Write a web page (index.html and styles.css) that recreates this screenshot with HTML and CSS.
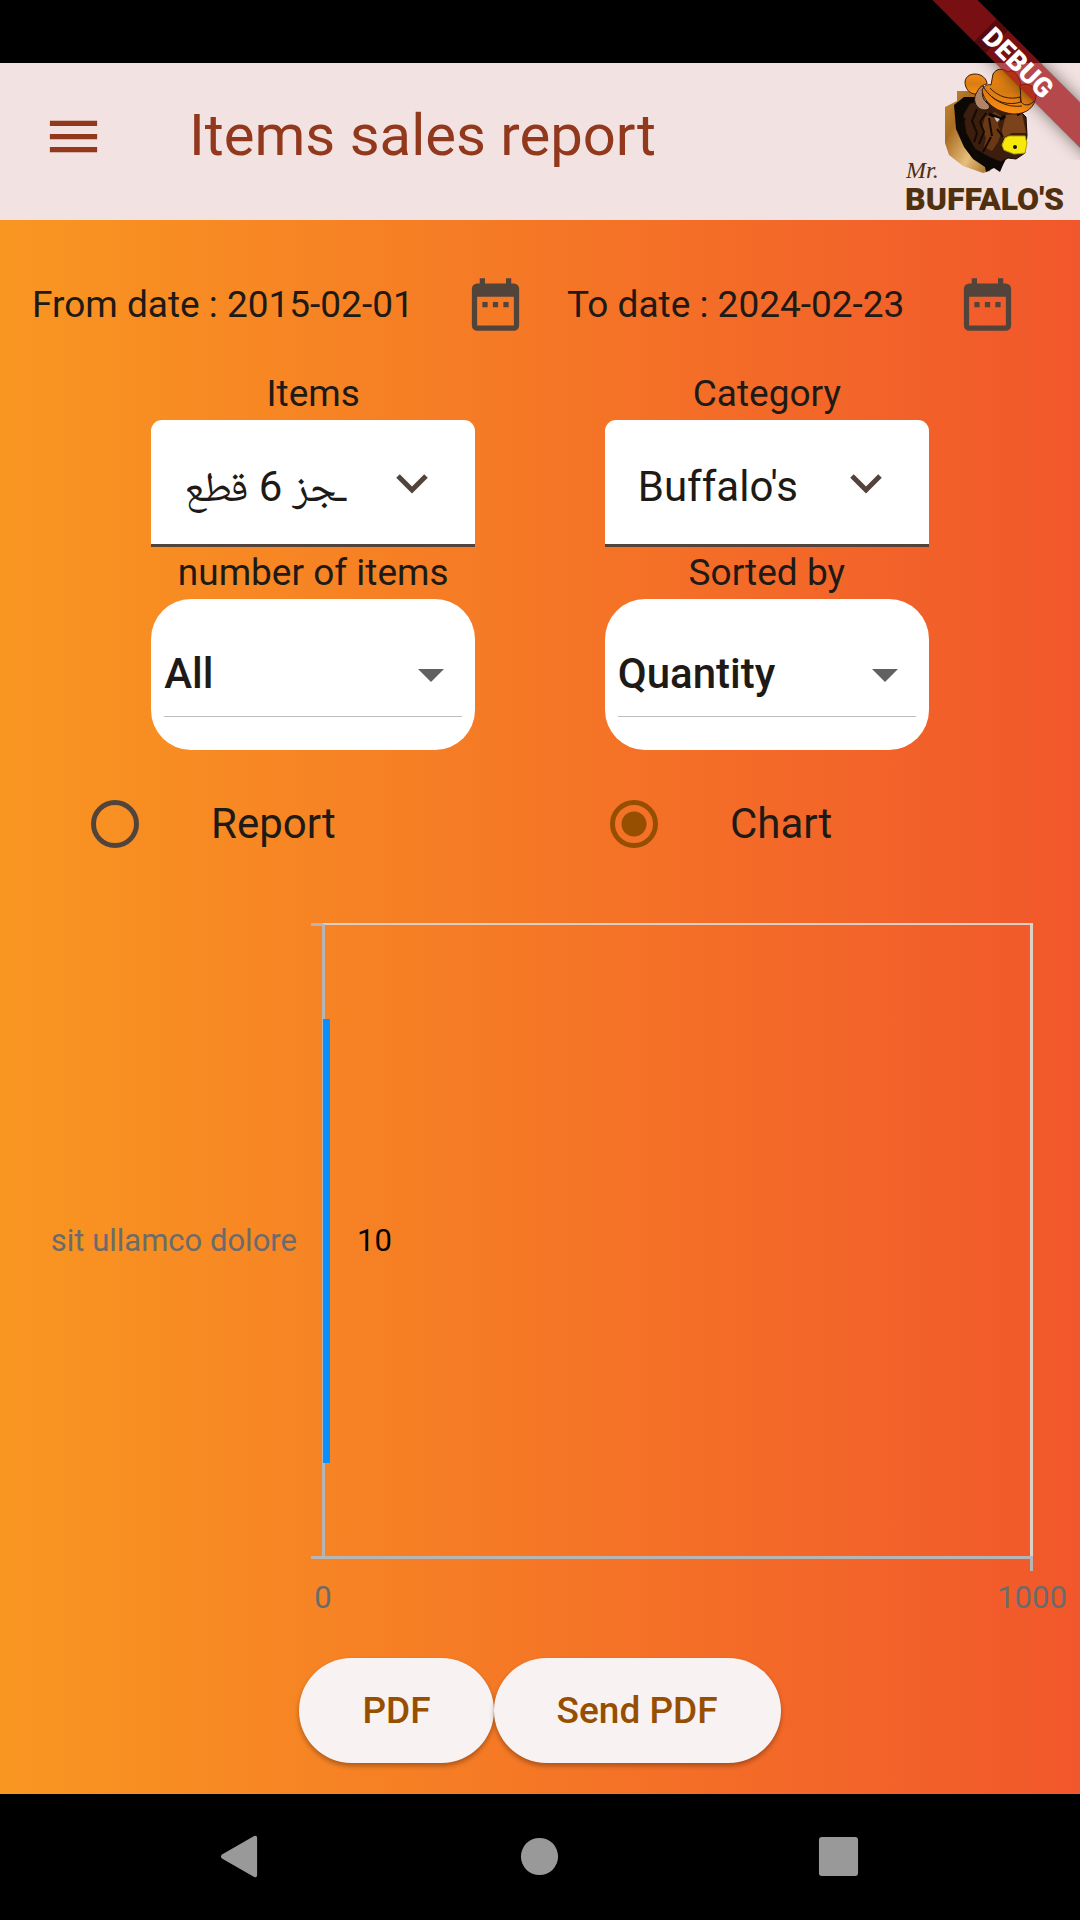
FILE: index.html
```html
<!DOCTYPE html>
<html lang="en">
<head>
<meta charset="utf-8">
<meta name="viewport" content="width=device-width, initial-scale=1">
<title>Items sales report</title>
<link rel="stylesheet" href="styles.css">
</head>
<body>
<div class="screen">
  <div class="status-bar"></div>

  <header class="app-bar">
    <button class="icon-button menu" type="button" aria-label="Open menu">
      <svg class="icon" viewBox="0 0 24 24"><path d="M3 18h18v-2H3v2zm0-5h18v-2H3v2zm0-7v2h18V6H3z"/></svg>
    </button>
    <h1 class="title">Items sales report</h1>
    <svg class="logo" viewBox="0 0 164 146" role="img" aria-label="Mr. Buffalo's">
      <defs>
        <linearGradient id="wood" x1="0" y1="0" x2="1" y2="1">
          <stop offset="0" stop-color="#c58a35"/><stop offset="0.3" stop-color="#a86d22"/>
          <stop offset="0.65" stop-color="#e8bd7c"/><stop offset="1" stop-color="#9c641c"/>
        </linearGradient>
        <linearGradient id="hat" x1="0" y1="0" x2="0" y2="1">
          <stop offset="0" stop-color="#f58a12"/><stop offset="0.5" stop-color="#d97c14"/><stop offset="1" stop-color="#ff8e12"/>
        </linearGradient>
      </defs>
      <path d="M55 22h30l5 76-2 4-7 2-20-7-14-11-4-12V38l12-6z" fill="url(#wood)"/>
      <path d="M62 28h14l20 20 9 40-4 8-3 7-6-4-8 4-1-5-12-8-9-12-8-18-2-24z" fill="#0c0806"/>
      <path d="M68 34l20-2 30 10 6 6 1 18-2 18-9 6-8-1-7 4-12-5-14-8-9-16-3-18z" fill="#3b1e0d" stroke="#160b05" stroke-width="1"/>
      <path d="M83 48l10-5 7 5-4 7 3 10-3 8-6 9-8-4 2-9-4-10z" fill="#6b3815"/>
      <path d="M104 46l16-2 4 20h-14l-9 5-1-8z" fill="#7b4319"/>
      <path d="M75 40l-5 12 5 12-3 9m12-29-6 9 4 10-5 12m12-7-8 15m-18-34-4 8 3 9m33-6 6 8m-33 10 9 12m10-41 3 18" fill="none" stroke="#150a04" stroke-width="2"/>
      <path d="M87 45l12 5 4-3m12-1 6-4" fill="none" stroke="#0c0806" stroke-width="3"/>
      <path d="M92 48l6 2-3 3z" fill="#c9d4d0"/>
      <path d="M103 69l4-2h16l2 7-2 10-11 1-10-4-2-5z" fill="#f7e80c" stroke="#b6a60c"/>
      <circle cx="113" cy="78" r="2" fill="#111"/>
      <path d="M74 24c-4 9 1 17 9 17 5 0 6-4 2-7-5-5-6-9-3-17-4 0-7 3-8 7z" fill="#b08468" stroke="#22130b" stroke-width="1"/>
      <path d="M64 18c-3-7 1-13 9-13 7 0 12 5 12 10-7 1-9 6-11 10-4 0-8-2-10-7z" fill="url(#hat)" stroke="#3a1d05"/>
      <path d="M80 21c3-5 6-6 9-5l2-11c5-8 12-4 15-2 5-4 11 3 13 13 9-3 15 3 15 11-1 11-9 18-22 18-15-1-30-10-32-24z" fill="url(#hat)" stroke="#3a1d05"/>
      <path d="M88 19c8 9 20 12 30 9l1 5c-12 4-26 0-33-9M82 19c8 12 22 20 38 18M118 16l1 17c4 5 10 3 14-2" fill="none" stroke="#3a1d05" stroke-width="1"/>
      <text class="logo-mr" x="4" y="109">Mr.</text>
      <text class="logo-name" x="3" y="141">BUFFALO'S</text>
    </svg>
  </header>

  <main class="content">
    <section class="dates" aria-label="Date range">
      <span>From date : 2015-02-01</span>
      <button class="icon-button calendar" type="button" aria-label="Pick from date">
        <svg class="icon" viewBox="0 0 24 24"><path d="M19 4h-1V2h-2v2H8V2H6v2H5a2 2 0 0 0-2 2v14a2 2 0 0 0 2 2h14a2 2 0 0 0 2-2V6a2 2 0 0 0-2-2zm0 16H5V9h14v11zM7 11h2v2H7zm4 0h2v2h-2zm4 0h2v2h-2z"/></svg>
      </button>
      <span>To date : 2024-02-23</span>
      <button class="icon-button calendar" type="button" aria-label="Pick to date">
        <svg class="icon" viewBox="0 0 24 24"><path d="M19 4h-1V2h-2v2H8V2H6v2H5a2 2 0 0 0-2 2v14a2 2 0 0 0 2 2h14a2 2 0 0 0 2-2V6a2 2 0 0 0-2-2zm0 16H5V9h14v11zM7 11h2v2H7zm4 0h2v2h-2zm4 0h2v2h-2z"/></svg>
      </button>
    </section>

    <section class="filters" aria-label="Filters">
      <div class="field">
        <label for="items">Items</label>
        <div class="filled">
          <select id="items"><option>ـجز 6 قطع</option></select>
          <svg class="chevron" viewBox="0 0 32 20"><path d="M2 2l14 14L30 2" fill="none" stroke="currentColor" stroke-width="5"/></svg>
        </div>
      </div>
      <div class="field">
        <label for="category">Category</label>
        <div class="filled">
          <select id="category"><option>Buffalo's</option></select>
          <svg class="chevron" viewBox="0 0 32 20"><path d="M2 2l14 14L30 2" fill="none" stroke="currentColor" stroke-width="5"/></svg>
        </div>
      </div>
      <div class="field">
        <label for="count">number of items</label>
        <div class="rounded">
          <select id="count"><option>All</option></select>
          <svg class="caret" viewBox="0 0 26 13"><path d="M0 0h26L13 13z"/></svg>
        </div>
      </div>
      <div class="field">
        <label for="sort">Sorted by</label>
        <div class="rounded">
          <select id="sort"><option>Quantity</option></select>
          <svg class="caret" viewBox="0 0 26 13"><path d="M0 0h26L13 13z"/></svg>
        </div>
      </div>
    </section>

    <section class="modes" aria-label="View">
      <label class="mode"><input type="radio" name="view">Report</label>
      <label class="mode"><input type="radio" name="view" checked>Chart</label>
    </section>

    <section class="chart" aria-label="Sales chart">
      <span class="category-label">sit ullamco dolore</span>
      <div class="plot">
        <div class="bar" style="width: 1%"></div>
        <span class="value">10</span>
      </div>
      <div class="ticks"><span>0</span><span>1000</span></div>
    </section>

    <div class="actions">
      <button class="pill" type="button">PDF</button>
      <button class="pill" type="button">Send PDF</button>
    </div>
  </main>

  <nav class="nav-bar" aria-label="System">
    <button type="button" aria-label="Back"><svg viewBox="0 0 44 44"><path d="M3 20L36 1q3-1 3 2v38q0 3-3 2L3 24q-2-2 0-4z"/></svg></button>
    <button type="button" aria-label="Home"><svg viewBox="0 0 44 44"><circle cx="22" cy="22" r="19"/></svg></button>
    <button type="button" aria-label="Recents"><svg viewBox="0 0 44 44"><rect x="2" y="2" width="40" height="40" rx="3"/></svg></button>
  </nav>

  <div class="debug"><span class="ribbon">DEBUG</span></div>
</div>
</body>
</html>
```
FILE: styles.css
```css
* {
  box-sizing: border-box;
}

body {
  margin: 0;
  background: #000;
  color: #201a17;
  font-family: Roboto, "Noto Sans", "Noto Naskh Arabic", "DejaVu Sans", sans-serif;
  font-size: 37px;
  line-height: 52px;
}

button,
select {
  margin: 0;
  border: 0;
  padding: 0;
  background: none;
  color: inherit;
  font: inherit;
}

.screen {
  position: relative;
  display: flex;
  flex-direction: column;
  min-height: 100vh;
}

.status-bar {
  height: 63px;
  background: #000;
}

.app-bar {
  display: flex;
  align-items: center;
  height: 157px;
  padding: 0 14px 0 42px;
  background: #f2e2e1;
  color: #91381d;
}

.title {
  flex: 1;
  margin: 0 0 14px 84px;
  font-size: 58px;
  font-weight: 400;
  line-height: 76px;
}

.icon-button {
  display: block;
  width: 63px;
  height: 63px;
}

.menu {
  margin-bottom: 10px;
}

.icon {
  display: block;
  width: 100%;
  fill: currentColor;
}

.logo {
  width: 164px;
  height: 146px;
  overflow: visible;
}

.logo-mr {
  fill: #50300f;
  font-family: "Liberation Serif", serif;
  font-size: 24px;
  font-style: italic;
}

.logo-name {
  fill: #50300f;
  font-size: 32px;
  font-weight: 900;
}

.content {
  flex: 1;
  padding-bottom: 31px;
  background: linear-gradient(90deg, #f99621, #f57726, #f1572b);
}

.dates {
  display: grid;
  grid-template-columns: 432fr 103fr 389fr 124fr;
  align-items: center;
  padding: 53px 0 0 32px;
}

.calendar {
  color: #53443b;
}

.filters {
  display: grid;
  grid-template-columns: 30% 30%;
  column-gap: 12%;
  justify-content: center;
  margin-top: 32px;
}

.field label {
  display: block;
  text-align: center;
}

.filled,
.rounded {
  display: grid;
  align-items: center;
  background: #fff;
}

.filled > *,
.rounded > * {
  grid-area: 1 / 1;
}

.field select {
  width: 100%;
  appearance: none;
  font-size: 42px;
}

.filled {
  height: 127px;
  border-bottom: 3px solid #53443b;
  border-radius: 11px 11px 0 0;
}

.filled select {
  height: 124px;
  padding: 10px 126px 0 33px;
}

.chevron {
  justify-self: end;
  width: 32px;
  margin: 3px 47px 0 0;
  color: #53443b;
}

.rounded {
  height: 151px;
  padding: 0 13px 33px;
  border-radius: 40px;
}

.rounded select {
  height: 118px;
  padding-top: 32px;
  border-bottom: 1px solid #bdbdbd;
  font-weight: 500;
}

.caret {
  justify-self: end;
  width: 26px;
  margin: 35px 18px 0 0;
  fill: #616161;
}

.modes {
  display: grid;
  grid-template-columns: 519fr 561fr;
  margin-top: 48px;
  font-size: 42px;
}

.mode {
  display: flex;
  align-items: center;
  gap: 72px;
  padding-left: 91px;
}

.mode input {
  width: 48px;
  height: 48px;
  margin: 0;
  border: 5px solid #53443b;
  border-radius: 50%;
  appearance: none;
}

.mode input:checked {
  border-color: #964f00;
  background: radial-gradient(circle, #964f00 12px, transparent 13px);
}

.chart {
  display: grid;
  grid-template-columns: 322px 1fr;
  margin-top: 73px;
  padding-right: 47px;
  color: #6b6b6b;
  font-size: 31px;
  line-height: 38px;
}

.category-label {
  align-self: center;
  padding-right: 25px;
  text-align: right;
}

.plot {
  position: relative;
  display: flex;
  align-items: center;
  gap: 27px;
  height: 636px;
  border: 2px solid #ddd0c6;
  border-width: 2px 3px 3px;
  border-bottom-color: #b5b5b5;
  border-left-color: #b5b5b5;
}

.plot::before {
  position: absolute;
  top: -2px;
  bottom: -3px;
  left: -14px;
  width: 11px;
  border: solid #b5b5b5;
  border-width: 3px 0;
  content: "";
}

.plot::after {
  position: absolute;
  top: 100%;
  right: -3px;
  width: 3px;
  height: 15px;
  background: #b5b5b5;
  content: "";
}

.bar {
  height: 444px;
  margin-left: -2px;
  background: #0a8fff;
}

.value {
  color: #000;
}

.ticks {
  display: flex;
  grid-column: 1 / -1;
  justify-content: space-between;
  margin: 20px -47px 0 275px;
}

.ticks span {
  width: 96px;
  text-align: center;
}

.actions {
  display: flex;
  justify-content: center;
  margin-top: 41px;
}

.pill {
  height: 105px;
  padding: 0 63px;
  border-radius: 53px;
  background: #f8f2f2;
  box-shadow: 0 3px 5px rgba(0, 0, 0, 0.3);
  color: #964f00;
  font-weight: 500;
}

.nav-bar {
  display: flex;
  align-items: center;
  justify-content: center;
  gap: 256px;
  height: 126px;
  padding: 0 2px 1px 0;
  background: #000;
}

.nav-bar button {
  width: 43px;
  height: 43px;
}

.nav-bar svg {
  display: block;
  fill: #999;
}

.debug {
  position: absolute;
  top: 0;
  right: 0;
  width: 160px;
  height: 160px;
  overflow: hidden;
  pointer-events: none;
}

.ribbon {
  position: absolute;
  top: 47px;
  right: -88px;
  width: 300px;
  height: 32px;
  background: linear-gradient(90deg, transparent 104px, rgba(0, 0, 0, 0.3) 104px, rgba(0, 0, 0, 0.3) 120px, transparent 120px), rgba(160, 20, 24, 0.75);
  box-shadow: 0 0 16px rgba(0, 0, 0, 0.5);
  color: #fff;
  font-size: 27px;
  font-weight: 900;
  line-height: 32px;
  text-align: center;
  transform: rotate(45deg);
}
```
